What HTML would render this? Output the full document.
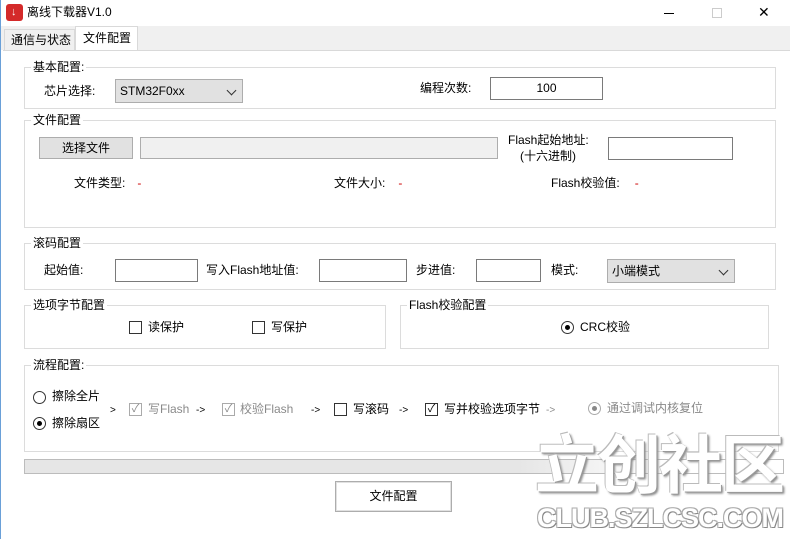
<!DOCTYPE html><html><head><meta charset="utf-8"><style>
*{margin:0;padding:0;box-sizing:border-box}
body{width:790px;height:539px;background:#fff;font-family:"Liberation Sans","Noto Sans CJK SC",sans-serif;font-size:12px;color:#000;position:relative;overflow:hidden}
.a{position:absolute;white-space:nowrap;line-height:14px}
.gb{position:absolute;border:1px solid #dcdcdc}
.gl{position:absolute;background:#fff;padding:0 2px;font-size:12px;line-height:14px}
.tb{position:absolute;border:1px solid #7a7a7a;background:#fff}
.cb{position:absolute;width:13px;height:13px;border:1px solid #333;background:#fff;font-size:11px;line-height:11px;text-align:center}
.rb{position:absolute;width:13px;height:13px;border:1px solid #333;border-radius:50%;background:#fff}
.g{color:#8a8a8a}
.dd{position:absolute;border:1px solid #adadad;background:#e1e1e1;padding:0 0 0 4px;line-height:22px}
.ar{position:absolute;right:7px;top:7px;width:7px;height:7px;border-right:1px solid #333;border-bottom:1px solid #333;transform:rotate(45deg)}
</style></head><body>
<div class="a" style="left:0;top:0;width:790px;height:27px;background:#fff"></div>
<div class="a" style="left:6px;top:4px;width:17px;height:17px;background:#d42a2a;border-radius:3px"></div>
<div class="a" style="left:11px;top:5px;color:#fff;font-size:11px;font-weight:bold">↓</div>
<div class="a" style="left:27px;top:5px;font-size:12px">离线下载器V1.0</div>
<div class="a" style="left:664px;top:13px;width:10px;height:1px;background:#000"></div>
<div class="a" style="left:712px;top:8px;width:10px;height:10px;border:1px solid #ccc"></div>
<div class="a" style="left:758px;top:4px;font-size:14px;line-height:16px">✕</div>
<div class="a" style="left:0;top:26px;width:790px;height:24px;background:#f0f0f0"></div>
<div class="a" style="left:0;top:0;width:1px;height:539px;background:#6aa0d8"></div>
<div class="a" style="left:4px;top:29px;width:71px;height:22px;border:1px solid #d9d9d9;background:#f0f0f0;padding:3px 0 0 6px">通信与状态</div>
<div class="a" style="left:75px;top:26px;width:63px;height:25px;border:1px solid #d9d9d9;border-bottom:none;background:#fff;padding:4px 0 0 7px">文件配置</div>
<div class="a" style="left:3px;top:50px;width:787px;height:1px;background:#d9d9d9"></div>

<div class="gb" style="left:24px;top:67px;width:752px;height:42px"></div>
<div class="gl" style="left:31px;top:60px">基本配置:</div>
<div class="a" style="left:44px;top:84px">芯片选择:</div>
<div class="dd" style="left:115px;top:79px;width:128px;height:24px">STM32F0xx<span class="ar"></span></div>
<div class="a" style="left:420px;top:81px">编程次数:</div>
<div class="tb" style="left:490px;top:77px;width:113px;height:23px;text-align:center;line-height:21px">100</div>

<div class="gb" style="left:24px;top:120px;width:752px;height:108px"></div>
<div class="gl" style="left:31px;top:113px">文件配置</div>
<div class="a" style="left:39px;top:137px;width:94px;height:22px;border:1px solid #adadad;background:#e1e1e1;text-align:center;line-height:20px">选择文件</div>
<div class="a" style="left:140px;top:137px;width:358px;height:22px;border:1px solid #adadad;background:#f0f0f0"></div>
<div class="a" style="left:508px;top:133px">Flash起始地址:</div>
<div class="a" style="left:520px;top:149px">(十六进制)</div>
<div class="tb" style="left:608px;top:137px;width:125px;height:23px"></div>
<div class="a" style="left:74px;top:176px">文件类型:<span style="color:#c00;margin-left:12px">-</span></div>
<div class="a" style="left:334px;top:176px">文件大小:<span style="color:#c00;margin-left:13px">-</span></div>
<div class="a" style="left:551px;top:176px">Flash校验值:<span style="color:#c00;margin-left:15px">-</span></div>

<div class="gb" style="left:24px;top:243px;width:752px;height:47px"></div>
<div class="gl" style="left:31px;top:236px">滚码配置</div>
<div class="a" style="left:44px;top:263px">起始值:</div>
<div class="tb" style="left:115px;top:259px;width:83px;height:23px"></div>
<div class="a" style="left:206px;top:263px">写入Flash地址值:</div>
<div class="tb" style="left:319px;top:259px;width:88px;height:23px"></div>
<div class="a" style="left:416px;top:263px">步进值:</div>
<div class="tb" style="left:476px;top:259px;width:65px;height:23px"></div>
<div class="a" style="left:551px;top:263px">模式:</div>
<div class="dd" style="left:607px;top:259px;width:128px;height:24px">小端模式<span class="ar"></span></div>

<div class="gb" style="left:24px;top:305px;width:362px;height:44px"></div>
<div class="gl" style="left:31px;top:298px">选项字节配置</div>
<div class="cb" style="left:129px;top:321px"></div><div class="a" style="left:148px;top:320px">读保护</div>
<div class="cb" style="left:252px;top:321px"></div><div class="a" style="left:271px;top:320px">写保护</div>

<div class="gb" style="left:400px;top:305px;width:369px;height:44px"></div>
<div class="gl" style="left:407px;top:298px">Flash校验配置</div>
<div class="rb" style="left:561px;top:321px"></div><div class="a" style="left:565px;top:325px;width:5px;height:5px;border-radius:50%;background:#000"></div>
<div class="a" style="left:580px;top:320px">CRC校验</div>

<div class="gb" style="left:24px;top:365px;width:755px;height:87px"></div>
<div class="gl" style="left:31px;top:358px">流程配置:</div>
<div class="rb" style="left:33px;top:391px"></div><div class="a" style="left:52px;top:389px">擦除全片</div>
<div class="rb" style="left:33px;top:417px"></div><div class="a" style="left:37px;top:421px;width:5px;height:5px;border-radius:50%;background:#000"></div><div class="a" style="left:52px;top:416px">擦除扇区</div>
<div class="a" style="left:110px;top:404px;font-size:10px">&gt;</div>
<div class="cb g" style="left:129px;top:403px;border-color:#aaa">✓</div><div class="a g" style="left:148px;top:402px">写Flash</div>
<div class="a" style="left:196px;top:404px;font-size:10px">-&gt;</div>
<div class="cb g" style="left:222px;top:403px;border-color:#aaa">✓</div><div class="a g" style="left:240px;top:402px">校验Flash</div>
<div class="a" style="left:311px;top:404px;font-size:10px">-&gt;</div>
<div class="cb" style="left:334px;top:403px"></div><div class="a" style="left:353px;top:402px">写滚码</div>
<div class="a" style="left:399px;top:404px;font-size:10px">-&gt;</div>
<div class="cb" style="left:425px;top:403px">✓</div><div class="a" style="left:444px;top:402px">写并校验选项字节</div>
<div class="a g" style="left:546px;top:404px;font-size:10px">-&gt;</div>
<div class="rb" style="left:588px;top:402px;border-color:#aaa"></div><div class="a" style="left:592px;top:406px;width:5px;height:5px;border-radius:50%;background:#888"></div>
<div class="a g" style="left:607px;top:401px">通过调试内核复位</div>

<div class="a" style="left:24px;top:459px;width:760px;height:15px;border:1px solid #bcbcbc;background:linear-gradient(90deg,#e6e6e6 65%,#fff 85%)"></div>
<div class="a" style="left:335px;top:481px;width:117px;height:31px;border:1px solid #adadad;background:#fff;box-shadow:inset 0 0 0 1px #e1e1e1;text-align:center;line-height:29px">文件配置</div>

<div class="a" style="left:535px;top:428px;font-size:64px;line-height:76px;font-weight:bold;color:#fff;letter-spacing:-2px;text-shadow:1px 1px 0 #999,-1px -1px 0 #bbb,2px 2px 2px #888">立创社区</div>
<div class="a" style="left:537px;top:503px;font-size:27px;line-height:30px;font-weight:bold;color:#fff;letter-spacing:-1px;text-shadow:1px 1px 0 #888,-1px -1px 0 #aaa,1px -1px 0 #aaa,-1px 1px 0 #aaa">CLUB.SZLCSC.COM</div>
</body></html>
